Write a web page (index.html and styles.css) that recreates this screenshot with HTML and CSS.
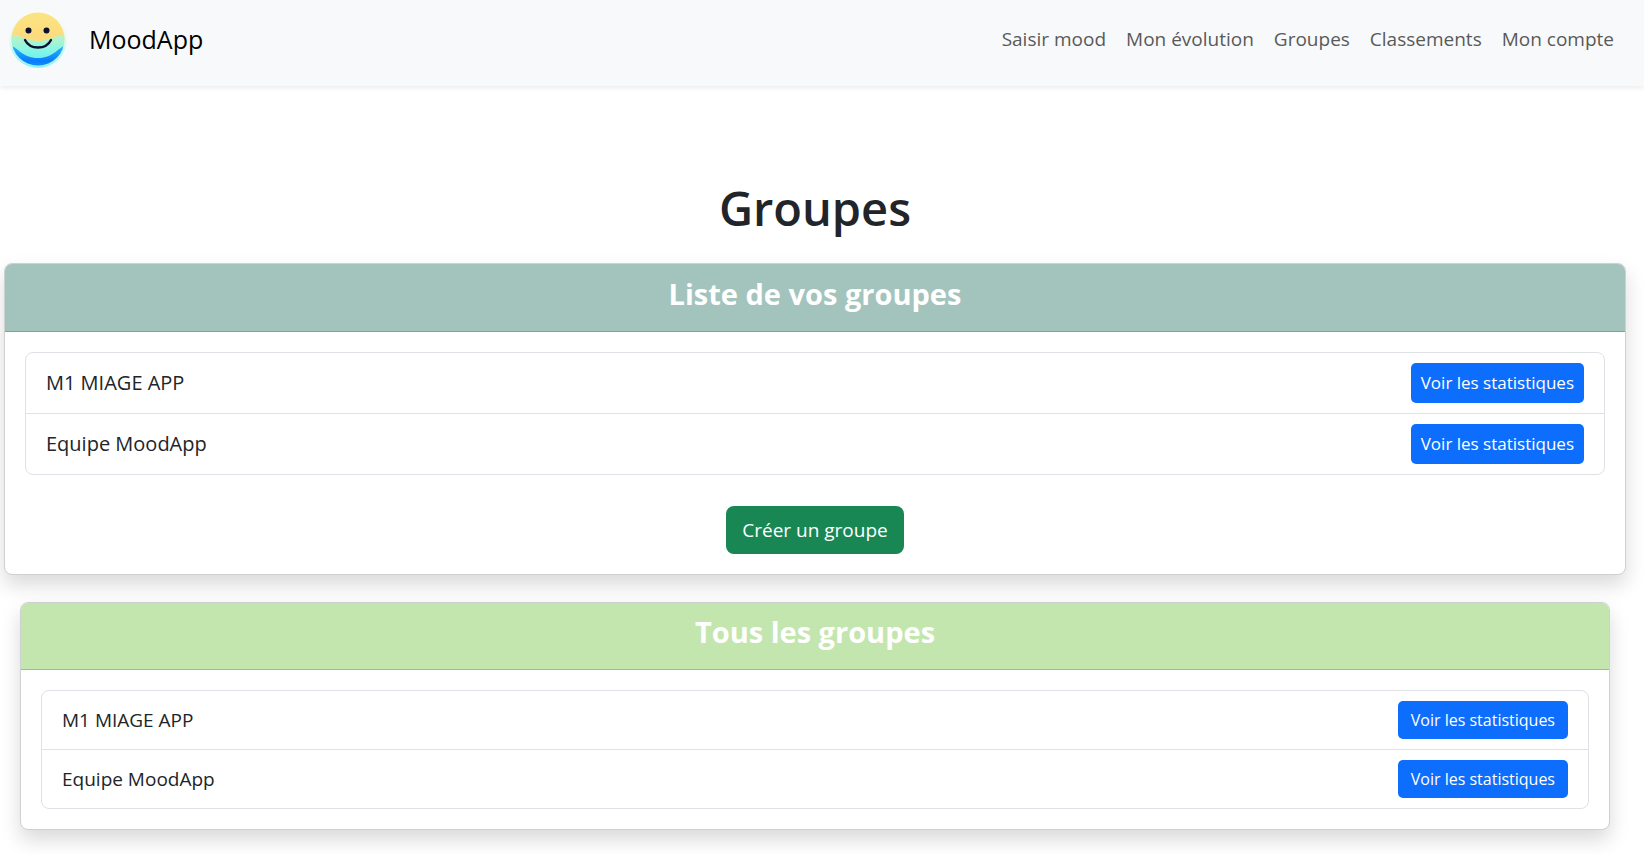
FILE: index.html
```
<!DOCTYPE html>
<html lang="fr">
<head>
<meta charset="utf-8">
<meta name="viewport" content="width=device-width, initial-scale=1">
<title>MoodApp - Groupes</title>
<link rel="stylesheet" href="styles.css">
</head>
<body>
<header class="navbar">
  <a class="brand" href="#">
    <svg class="logo" viewBox="0 0 60 60" aria-hidden="true">
      <defs>
        <linearGradient id="ring" x1="0" y1="0" x2="0" y2="1">
          <stop offset="0" stop-color="#fafbf6"/>
          <stop offset=".5" stop-color="#e9faf6"/>
          <stop offset="1" stop-color="#8df3f2"/>
        </linearGradient>
        <linearGradient id="sky" x1="0" y1="0" x2="0" y2="1">
          <stop offset="0" stop-color="#fbe683"/>
          <stop offset=".45" stop-color="#fddb7d"/>
          <stop offset="1" stop-color="#f3e39b"/>
        </linearGradient>
        <linearGradient id="foam" x1="0" y1="0" x2="0" y2="1">
          <stop offset="0" stop-color="#c3f0c0"/>
          <stop offset=".35" stop-color="#93f6df"/>
          <stop offset="1" stop-color="#4cf1fa"/>
        </linearGradient>
        <linearGradient id="sea" x1="0" y1="0" x2="0" y2="1">
          <stop offset="0" stop-color="#2ab8fa"/>
          <stop offset=".65" stop-color="#0a7cfb"/>
          <stop offset="1" stop-color="#129cfb"/>
        </linearGradient>
        <clipPath id="face"><circle cx="30" cy="30" r="26.500"/></clipPath>
      </defs>
      <circle cx="30" cy="30" r="29" fill="url(#ring)"/>
      <g clip-path="url(#face)">
        <rect width="60" height="60" fill="url(#sky)"/>
        <path d="M0 27c7-3 11 0 16 2 9 4 19 4 28 0 5-2 9-5 16-2v33H0z" fill="url(#foam)"/>
        <path d="M0 37c9-2 12 12 30 12s21-14 30-12v23H0z" fill="url(#sea)"/>
      </g>
      <circle cx="20.500" cy="21.500" r="3" fill="#0b1030"/>
      <circle cx="38.500" cy="21.500" r="3" fill="#0b1030"/>
      <path d="M17 31c5 10 21 10 26 0" fill="none" stroke="#0b1030" stroke-width="2.400" stroke-linecap="round"/>
    </svg>
    <span>MoodApp</span>
  </a>
  <nav class="nav">
    <a href="#">Saisir mood</a>
    <a href="#">Mon évolution</a>
    <a href="#">Groupes</a>
    <a href="#">Classements</a>
    <a href="#">Mon compte</a>
  </nav>
</header>
<main class="page">
  <h1 class="title">Groupes</h1>
  <section class="card card-active">
    <h2 class="card-header header-teal">Liste de vos groupes</h2>
    <div class="card-body">
      <ul class="list">
        <li><span>M1 MIAGE APP</span><button type="button" class="btn btn-primary">Voir les statistiques</button></li>
        <li><span>Equipe MoodApp</span><button type="button" class="btn btn-primary">Voir les statistiques</button></li>
      </ul>
      <button type="button" class="btn btn-success">Créer un groupe</button>
    </div>
  </section>
  <section class="card">
    <h2 class="card-header header-green">Tous les groupes</h2>
    <div class="card-body">
      <ul class="list">
        <li><span>M1 MIAGE APP</span><button type="button" class="btn btn-primary">Voir les statistiques</button></li>
        <li><span>Equipe MoodApp</span><button type="button" class="btn btn-primary">Voir les statistiques</button></li>
      </ul>
    </div>
  </section>
</main>
</body>
</html>
```
FILE: styles.css
```
* { box-sizing: border-box; }

body {
  margin: 0;
  background: #fff;
  color: #212529;
  font: 19px/30px "Open Sans", "Noto Sans", sans-serif;
}

.navbar {
  display: flex;
  align-items: center;
  justify-content: space-between;
  padding: 9px 30px 17px 8px;
  background: #f8f9fa;
  box-shadow: 0 2px 5px rgba(0, 0, 0, .08);
}

.brand {
  display: flex;
  align-items: center;
  gap: 21px;
  color: #000;
  font-size: 25px;
  text-decoration: none;
}

.logo { width: 60px; height: 60px; }

.nav { display: flex; gap: 20px; }

.nav a { color: #595a5b; text-decoration: none; }

.page { padding: 92px 34px 24px 20px; }

.title {
  margin: 0 0 25px;
  font-size: 47px;
  line-height: 60px;
  font-weight: 600;
  text-align: center;
}

.card {
  border: 1px solid #cfd0d1;
  border-radius: 8px;
  background: #fff;
  box-shadow: 0 10px 20px rgba(0, 0, 0, .15);
}

.card-active {
  margin: 0 -16px 27px;
}

.card-header {
  margin: 0;
  padding: 11px 20px 19px;
  border-bottom: 1px solid rgba(0, 0, 0, .18);
  border-radius: 7px 7px 0 0;
  color: #fff;
  font-size: 29px;
  line-height: 36px;
  font-weight: 700;
  text-align: center;
}

.card-active .card-header { padding: 12px 20px 19px; }

.header-teal { background: #a3c4bc; }
.header-green { background: #c3e6af; }

.card-body {
  display: flex;
  flex-direction: column;
  align-items: center;
  padding: 20px;
}

.list {
  width: 100%;
  margin: 0;
  padding: 0;
  border: 1px solid #dee2e6;
  border-radius: 8px;
  list-style: none;
}

.list li {
  display: flex;
  align-items: center;
  justify-content: space-between;
  padding: 10px 20px;
}

.list li + li { border-top: 1px solid #dee2e6; }

.card-active .list { font-size: 20px; }

.btn {
  border: 0;
  color: #fff;
  font-family: inherit;
  cursor: pointer;
}

.btn-primary {
  padding: 4px 13px;
  border-radius: 5px;
  background: #0d6efd;
  font-size: 16px;
  line-height: 30px;
}

.card-active .btn-primary {
  padding: 5px 10px;
  font-size: 17px;
}

.btn-success {
  margin-top: 31px;
  padding: 9px 16px;
  border-radius: 8px;
  background: #198754;
  font-size: 19px;
  line-height: 30px;
}
```
